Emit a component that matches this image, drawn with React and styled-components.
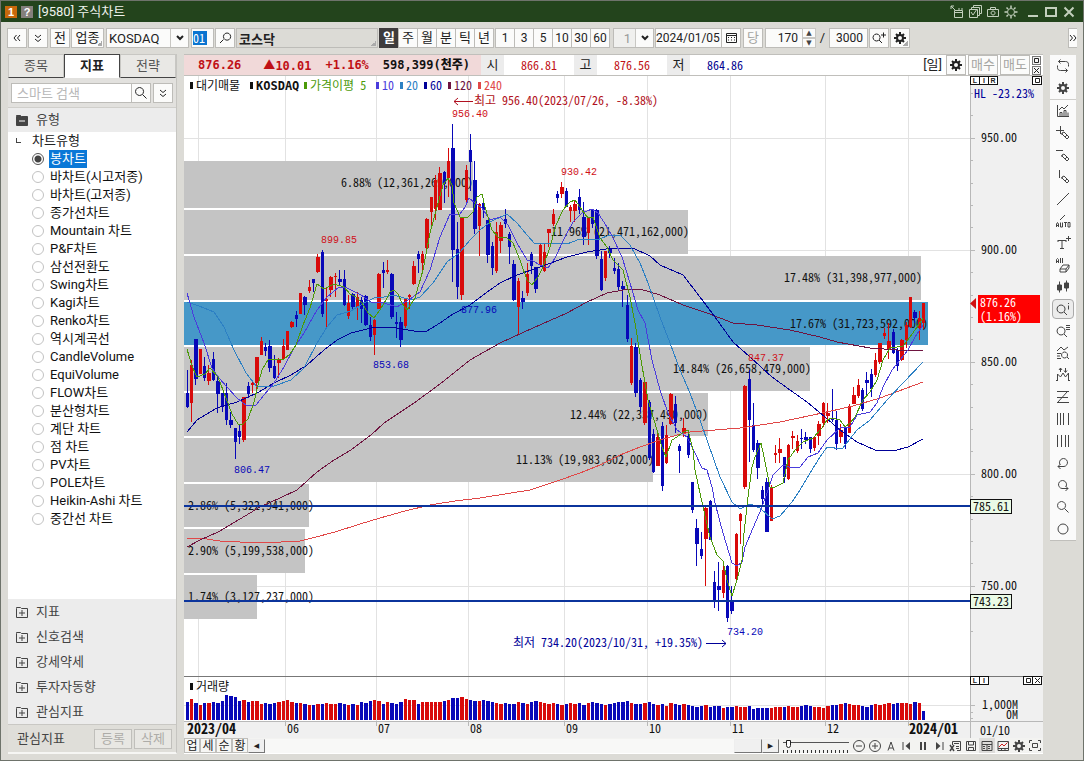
import React, { useState } from "react";
import styled, { createGlobalStyle, css } from "styled-components";

const UI = `Roboto, "Noto Sans CJK KR", sans-serif`;
const MONO = `"Noto Sans Mono CJK KR", "Noto Sans CJK KR", "Liberation Mono", monospace`;
const MONO_BOLD = `"DejaVu Sans Mono", "Noto Sans CJK KR", monospace`;

const GlobalStyle = createGlobalStyle`
  *, *::before, *::after { box-sizing: border-box; }
  body { margin: 0; background: #dcdbd6; font: 13px/18px ${UI}; color: #222; }
  button, input, select { font: inherit; color: inherit; margin: 0; border-radius: 0; }
  button { cursor: pointer; padding: 0; }
`;

/* ---------- icons ---------- */

const GEAR = (
  <>
    <circle cx="8" cy="8" r="3" strokeWidth="2" />
    <path d="M8 2v3M8 11v3M2 8h3M11 8h3M4 4l2 2M10 10l2 2M12 4l-2 2M6 10l-2 2" strokeWidth="2" />
  </>
);
const LENS = <path d="M9.5 9.5l4 4M6.5 2.5a4 4 0 1 0 .1 0z" />;
const PEN = <path d="M7 8l2-1 5 5-2 2-5-5zM7 8v2M10 12l2-2" />;

const ICONS = {
  dblLeft: <path d="M7.5 5L5 8l2.500 3M11 5L8.500 8l2.500 3" />,
  dblRight: <path d="M5 5l2.500 3L5 11M8.500 5L11 8l-2.500 3" />,
  dblDown: <path d="M5 5l3 2.500L11 5M5 9l3 2.500L11 9" />,
  down: <path d="M5 6l3 3 3-3" strokeWidth="2" />,
  lens: LENS,
  lensLeft: <path d="M6.500 9.500L3 13M10 3a3.600 3.600 0 1 0 .1 0z" />,
  lensPlus: <><path d="M5.500 4a3.500 3.500 0 1 0 .1 0zM8 10l3 3" /><path d="M10 5h5M12.500 2.500v5" /></>,
  calendar: <><path d="M3.500 3.500h10v9h-10zM3 5.500h11" /><path d="M5 7.500h7M5 10h7" strokeDasharray="1 2" /></>,
  gear: GEAR,
  sun: <><circle cx="8" cy="8" r="3.500" /><path d="M8 1.500V4M8 12v2.500M1.500 8H4M12 8h2.500M3.500 3.500L5 5M11 11l1.500 1.500M12.500 3.500L11 5M5 11l-1.500 1.500" strokeWidth="1.500" /></>,
  popout: <path d="M5.500 6.500h8v7h-8zM5.500 8.500h8M10 6V4M13 6V4M2 2l4 4M2 5V2h3" />,
  layers: <path d="M2.500 5.500h8v8h-8zM4.500 5V3.500h8v8H11M6.500 3V1.500h8v8H13M4 8l2 3 4-6" />,
  camera: <path d="M2.500 5.500h11v7h-11zM5.500 5V3.500h5V5M8 7a2 2 0 1 0 .1 0z" />,
  min: <path d="M3 12h10" strokeWidth="2" />,
  max: <path d="M3 4h10v8H3z" strokeWidth="2" />,
  close: <path d="M3.500 3.500l9 9M12.500 3.500l-9 9" strokeWidth="2" />,
  swap: <path d="M5.500 1.500l-2 2 2 2M3.500 3.500h7c2 0 3 1 3 3v2M10.500 14.500l2-2-2-2M12.500 12.500h-7c-2 0-3-1-3-3v-2" />,
  chartBars: <path d="M2.500 2v11.500H14M5 13V9.500h2V13M9 13V7.500h2V13M13 13V9.500M4 7l3-3 2 2 4-4" />,
  plusPen: <><path d="M1 5.500h8M5.500 1v8" />{PEN}</>,
  dashPen: <><path d="M1 3.500h7" />{PEN}</>,
  barPen: <><path d="M4.500 1v8" />{PEN}</>,
  slash: <path d="M2 14L14 2" />,
  auto: <><path d="M5 7l5-5" /><path d="M1.500 14v-3l1-1.500 1 1.500v3M1.500 12.500h2M5.500 9.500V14h2V9.500M9 9.500h3M10.500 9.500V14M13 9.500h2V14h-2z" /></>,
  text: <><path d="M3 5.500h8M3 5v2M11 5v2M7 5.500V14M5 13.500h4" /><path d="M11 3.500h5M13.500 1v5" /></>,
  eraser: <><path d="M1.500 6V2.500l1-1 1 1V6M1.500 4.500h2M5.500 1v5M7.500 1v5" /><path d="M5 12l3-4h6l-3 4zM5 12v3h6v-3M11 15l3-4V8" /></>,
  candles: <><path d="M4.500 2.500v11M11.500 1.500v11" /><path d="M2.500 6h4v5h-4zM9.500 4h4v5h-4z" fill="currentColor" /></>,
  lensI: <><path d="M6 4a4 4 0 1 0 .1 0zM9 11l3 3" /><path d="M13.500 4.500v4M13.500 2v1" /></>,
  lensList: <><path d="M6 4a4 4 0 1 0 .1 0zM9 11l3 3" /><path d="M11 2.500h4M11 4.500h4M11 6.500h4" /></>,
  waveLens: <><path d="M2 6l4-4 3 3 4-3M2 8.500h4M2 11h3M2 13.500h4" /><path d="M9.500 7a3 3 0 1 0 .1 0zM12 12l2 2" /></>,
  mountain: <path d="M2.500 14V7l3 3 2.500-4 2.500 4 3-4v8M5.500 1v4M4 3l1.500-2L7 3M10.500 1v4M9 3.500L10.500 5.500l1.500-2M1 13.500h2M13 13.500h2" />,
  zed: <path d="M2 2.500h12M12 3L3 13M2 8.500h11M2 13.500h12" />,
  bars3: <path d="M2.500 2v12M5.500 2v12M8.500 2v12M13.500 2v12" />,
  bars4: <path d="M2.500 2v12M6.500 2v12M10.500 2v12M13.500 2v12" />,
  undo: <path d="M5 9.500a4 4 0 1 1 4 2H3M5.500 9L3 11.500 5.500 14" />,
  redo: <path d="M11 9.500a4 4 0 1 0-4 2h6M10.500 9l2.500 2.500L10.500 14" />,
  circle: <circle cx="8" cy="8" r="5" />,
  zoomOut: <><circle cx="8" cy="8" r="5.500" /><path d="M5 8h6" /></>,
  zoomIn: <><circle cx="8" cy="8" r="5.500" /><path d="M5 8h6M8 5v6" /></>,
  peak: <path d="M5 12.500L8 4l3 8.500M6 10h4" />,
  first: <><path d="M4 4v8" /><path d="M11 4v8L6.500 8z" fill="currentColor" stroke="none" /></>,
  pause: <path d="M6 4v8M10 4v8" strokeWidth="2" />,
  last: <><path d="M12 4v8" /><path d="M5 4v8l4.500-4z" fill="currentColor" stroke="none" /></>,
  sheetX: <><path d="M5.500 7V3.500h8v9H10M7 5.500h5M9 8.500h3M9 10.500h3" /><path d="M3 7l4 6M7 7l-4 6" strokeWidth="1.500" /></>,
  save: <path d="M3.500 3.500h9v9h-9zM5.500 4v3h5V4M5.500 12V9.500h5V12" />,
  table: <><path d="M3 3.500h10v9H3zM3 6.500h10M8 7v5" /><path d="M4 8.500h3M9 8.500h3M4 10.500h3M9 10.500h3" strokeDasharray="2 1" /></>,
  chartBox: <><path d="M3 3.500h10.500v9H3zM3 10.500h10.500M6.500 11v1M10 11v1" /><path d="M4 9l3-3 2 2 3.500-3.500" stroke="#d02020" /></>,
  expand: <><path d="M5.500 5.500h5v4h-5z" /><path d="M2.500 5V2.500H5M11 2.500h2.500V5M13.500 10v2.500H11M5 12.500H2.500V10" /></>,
};

const IconSvg = styled.svg`
  display: block;
  flex: none;
  fill: none;
  stroke: currentColor;
  stroke-width: 1;
`;
const Icon = ({ name, size = 16 }) => (
  <IconSvg width={size} height={size} viewBox="0 0 16 16" aria-hidden="true">{ICONS[name]}</IconSvg>
);
const TinyIcon = ({ name }) => (
  <IconSvg width="7" height="7" viewBox="0 0 7 7" aria-hidden="true">
    <path d={name === "square" ? "M1.5 1.5h4v4h-4z" : "M1 1l5 5M6 1L1 6"} />
  </IconSvg>
);

/* ---------- window ---------- */

const Frame = styled.div`
  min-height: 100vh;
  display: flex;
  flex-direction: column;
  border: 1px solid #6e736b;
  background: #dcdbd6;
`;
const TitleBar = styled.header`
  display: flex;
  align-items: center;
  gap: 2px;
  height: 21px;
  padding: 0 6px 0 4px;
  background: #23441c;
  color: #eef2ec;
`;
const TitleTag = styled.span`
  width: 12px;
  height: 12px;
  margin-right: 2px;
  font: bold 11px/12px "Liberation Sans", sans-serif;
  text-align: center;
  color: #fff;
  background: ${(p) => (p.$warm ? "#c8690c" : "#85807c")};
`;
const Title = styled.h1`
  margin: 0 auto 0 1px;
  font: 13px/20px ${UI};
`;
const TitleButton = styled.button`
  display: grid;
  place-items: center;
  width: 16px;
  height: 18px;
  border: 0;
  background: none;
  color: #c3cfbd;
`;
const WindowButtons = styled.div`
  display: flex;
  gap: 2px;
  margin-left: 4px;
`;

/* ---------- top toolbar ---------- */

const Toolbar = styled.div`
  display: flex;
  align-items: center;
  gap: 1px;
  padding: 6px;
`;
const boxed = css`
  height: 20px;
  border: 1px solid #bdbcb8;
  background: #fbfbfa;
`;
const ToolButton = styled.button`
  ${boxed}
  display: flex;
  align-items: center;
  justify-content: center;
  flex: none;
  width: ${(p) => p.$w || 20}px;
  line-height: 16px;
  margin-left: ${(p) => p.$gap || 0}px;
  color: ${(p) => (p.$dim ? "#a5a5a2" : "#222")};
  ${(p) => p.$corner && "background: linear-gradient(135deg, transparent 50%, #aaa 50%) right 1px bottom 1px / 5px 5px no-repeat #fbfbfa;"}
`;
const SelectBox = styled.div`
  ${boxed}
  position: relative;
  display: flex;
  flex: none;
  width: ${(p) => p.$w}px;
  margin-left: ${(p) => p.$gap || 0}px;
  select {
    appearance: none;
    flex: 1;
    min-width: 0;
    border: 0;
    padding: 0 18px 0 2px;
    line-height: 17px;
    background: transparent;
    color: ${(p) => (p.$dim ? "#999" : "#222")};
    text-align-last: ${(p) => (p.$dim ? "right" : "left")};
    padding-right: ${(p) => (p.$dim ? 22 : 18)}px;
    ${(p) => p.$dim && "background: linear-gradient(#f0f0ee, #f0f0ee) left / 22px 100% no-repeat;"}
  }
  svg {
    position: absolute;
    right: 0;
    top: 1px;
    pointer-events: none;
  }
  &::after {
    content: "";
    position: absolute;
    right: 17px;
    top: 0;
    bottom: 0;
    border-left: 1px solid #c8c7c3;
  }
`;
const Field = styled.input`
  ${boxed}
  flex: none;
  width: ${(p) => p.$w}px;
  padding: 0 ${(p) => (p.$align ? 4 : 0)}px;
  margin-left: ${(p) => p.$gap || 0}px;
  font-size: 12px;
  line-height: 17px;
  text-align: ${(p) => p.$align || "left"};
`;
const CodeBox = styled.label`
  ${boxed}
  flex: none;
  width: 23px;
  padding: 2px 1px;
  margin-left: 1px;
  input {
    display: block;
    width: 14px;
    height: 14px;
    border: 0;
    padding: 0;
    font: 12px/14px ${MONO};
    color: #fff;
    background: #0a74d0;
  }
`;
const NameField = styled.input`
  ${boxed}
  flex: 0 1 142px;
  min-width: 60px;
  padding: 0 2px;
  font-weight: bold;
  background: linear-gradient(135deg, transparent 50%, #aaa 50%) right 1px bottom 1px / 5px 5px no-repeat #dcdbd6;
`;
const Periods = styled.div`
  display: flex;
  flex: none;
  margin-left: ${(p) => p.$gap || 0}px;
`;
const PeriodButton = styled.button`
  ${boxed}
  width: 20px;
  margin-right: -1px;
  line-height: 16px;
  font-size: ${(p) => (p.$num ? 12 : 13)}px;
  ${(p) => p.$on && "background: #3e3b3c; border-color: #3e3b3c; color: #fff; font-weight: bold;"}
`;
const Spinner = styled.div`
  display: flex;
  flex-direction: column;
  flex: none;
  margin-left: -2px;
  button {
    width: 14px;
    height: 10px;
    border: 1px solid #c8c7c3;
    background: #fbfbfa;
    font: 7px/7px "DejaVu Sans", sans-serif;
    color: #444;
  }
`;
const Slash = styled.span`
  width: 11px;
  text-align: center;
`;
const CalendarButton = styled(ToolButton)`
  margin-left: -2px;
`;
const MoreButton = styled(ToolButton)`
  width: 9px;
  margin-left: auto;
  border-right: 0;
  overflow: hidden;
`;

/* ---------- left pane ---------- */

const Body = styled.main`
  flex: 1;
  display: grid;
  grid-template-columns: 169px minmax(0, 1fr) 26px;
  gap: 7px;
  padding: 0 7px 6px;
`;
const Side = styled.aside`
  display: flex;
  flex-direction: column;
  border-right: 1px solid #c6c5c1;
  border-bottom: 2px solid #f6f6f4;
  background: #ececec;
`;
const Tabs = styled.div`
  display: grid;
  grid-template-columns: 1fr 1fr 1fr;
  background: #e6e5e2;
`;
const Tab = styled.button`
  height: 24px;
  border: 1px solid #c8c7c3;
  border-bottom-color: #444;
  background: #e9e8e5;
  color: #555;
  ${(p) => p.$on && "background: #fff; border-color: #444; border-bottom-color: #fff; color: #222; font-weight: bold;"}
`;
const SearchRow = styled.div`
  display: flex;
  height: 30px;
  padding: 5px 3px;
  border-bottom: 1px solid #d0cfcb;
  background: #e2e1de;
  input {
    ${boxed}
    flex: 1;
    min-width: 0;
    padding: 0 5px;
    background: #fff;
  }
  input::placeholder { color: #b8b8b8; }
  button { margin-left: -1px; }
  button + button { margin-left: 2px; }
`;
const SectionTitle = styled.button`
  display: flex;
  align-items: center;
  gap: 8px;
  height: ${(p) => p.$h}px;
  padding: 0 8px;
  border: 0;
  background: #ececec;
  text-align: left;
  color: #444;
`;
const Folder = styled.svg`
  display: block;
  width: 12px;
  height: 12px;
`;
const Tree = styled.fieldset`
  flex: 1;
  margin: 0;
  padding: 0 0 0 24px;
  border: 0;
  background: #fff;
  min-width: 0;
`;
const TreeRoot = styled.div`
  position: relative;
  height: 18px;
  &::before {
    content: "";
    position: absolute;
    left: -16px;
    top: 6px;
    width: 5px;
    height: 5px;
    border: 1px solid #444;
    border-width: 0 0 1px 1px;
  }
`;
const Choice = styled.label`
  display: flex;
  align-items: center;
  gap: 5px;
  height: 18px;
  color: #111;
  input {
    appearance: none;
    width: 12px;
    height: 12px;
    border: 1px solid #c2c2c2;
    border-radius: 50%;
    background: #fff;
  }
  input:checked {
    border-color: #555;
    background: radial-gradient(circle, #444 3px, #fff 4px);
  }
  span { padding: 0 1px; line-height: 18px; }
  input:checked + span { background: #0a78d7; color: #fff; }
`;
const SideFoot = styled.div`
  display: flex;
  align-items: center;
  gap: 2px;
  height: 28px;
  padding: 0 4px 0 9px;
  border-top: 1px solid #c9c8c4;
  background: #dfded9;
  color: #444;
  span { margin-right: auto; }
  button {
    width: 38px;
    height: 20px;
    line-height: 16px;
    border: 1px solid #c0bfbb;
    background: #e8e7e3;
    color: #adaca8;
  }
`;

/* ---------- chart panel ---------- */

const Panel = styled.section`
  display: flex;
  flex-direction: column;
  min-width: 0;
  background: #fff;
`;
const Quote = styled.div`
  display: flex;
  align-items: stretch;
  height: 22px;
  border: 1px solid #c0bfbb;
  border-width: 1px 0;
`;
const DayPrices = styled.dl`
  display: flex;
  margin: 0;
  font: 12px/20px ${MONO};
  dt {
    width: 23px;
    text-align: center;
    font: 13px/20px ${UI};
    background: #ececec;
  }
`;
const Price = styled.dd`
  width: 70px;
  margin: 0;
  padding-left: 17px;
  color: ${(p) => (p.$down ? "#000090" : "#c01016")};
`;
const Summary = styled.div`
  display: flex;
  gap: 14px;
  width: 297px;
  padding-left: 14px;
  background: #f1d9d9;
  font: bold 12px/20px ${MONO_BOLD};
  white-space: nowrap;
  color: #c01016;
  b:first-child { margin-right: 8px; }
  b:last-child { color: #111; }
  span { font-family: "Noto Sans CJK KR", sans-serif; }
`;
const QuoteTools = styled.div`
  display: flex;
  align-items: center;
  gap: 2px;
  margin-left: auto;
  padding-right: 2px;
  line-height: 18px;
  > span { margin-right: 2px; }
`;
const TinyStack = styled.div`
  display: grid;
  gap: 1px;
  button {
    width: 9px;
    height: 9px;
    border: 1px solid #777;
    background: #f4f4f4;
  }
`;
const PaneBox = styled.div`
  position: relative;
`;
const ChartSvg = styled.svg`
  display: block;
  width: 100%;
  height: auto;
  font: 12px ${MONO};
`;
const Badges = styled.div`
  position: absolute;
  top: 0;
  right: 0;
  width: 73px;
  padding-right: 2px;
  display: flex;
  justify-content: space-between;
  div { display: flex; }
  button {
    display: grid;
    place-items: center;
    width: 10px;
    height: 9px;
    border: 1px solid #111;
    margin-right: -1px;
    background: #fff;
    font: bold 7px/7px "Liberation Sans", sans-serif;
  }
`;
const BottomBar = styled.div`
  display: flex;
  align-items: center;
  height: 15px;
  background: #f3f3f1;
`;
const ModeButton = styled.button`
  width: 16px;
  height: 15px;
  border: 1px solid #c0bfbb;
  background: #f6f6f4;
  font: 12px/12px ${UI};
`;
const ScrollButton = styled.button`
  width: 17px;
  height: 14px;
  border: 1px solid;
  border-color: #eee #777 #777 #eee;
  background: #f0f0f0;
  font: 7px/10px "DejaVu Sans", sans-serif;
`;
const Track = styled.div`
  flex: 1;
  display: flex;
  justify-content: flex-end;
  height: 14px;
  background: #f8f8f7;
  button { width: 28px; }
`;
const ZoomRange = styled.input`
  appearance: none;
  width: 66px;
  height: 14px;
  margin: 0 2px 0 4px;
  background:
    linear-gradient(#555, #555) 0 3px / 100% 1px no-repeat,
    repeating-linear-gradient(90deg, #333 0 1px, transparent 1px 4px) 0 100% / 100% 3px no-repeat;
  &::-webkit-slider-thumb {
    appearance: none;
    width: 5px;
    height: 8px;
    margin-top: -3px;
    border: 1px solid #222;
    border-radius: 0 0 3px 3px;
    background: #fff;
  }
`;
const FootIcon = styled.button`
  display: grid;
  place-items: center;
  width: 16px;
  height: 15px;
  border: 0;
  background: ${(p) => (p.$on ? "#dedddb" : "none")};
  color: #444;
`;

/* ---------- right tool strip ---------- */

const Strip = styled.nav`
  display: flex;
  flex-direction: column;
  align-self: start;
  margin-top: 1px;
  border-bottom: 1px solid #c0bfbb;
  background: #fafafa;
  hr { width: 100%; margin: 0; border: 0; border-top: 1px solid #cfcecb; }
`;
const StripButton = styled.button`
  display: grid;
  place-items: center;
  height: 22px;
  margin: 0 2px;
  border: 0;
  background: none;
  color: #444;
  ${(p) => p.$on && "height: 20px; margin: 1px 2px; border: 1px solid #aaa; border-radius: 4px; background: #ececec;"}
`;

/* ---------- chart data ---------- */

const FIRST_X = 186.67;
const STEP = 4.357;
const candleX = (i) => Math.round(FIRST_X + STEP * i);
const bodyWidth = (i) => candleX(i + 1) - candleX(i) - 1;
/* Levels are stored in thirds of a chart unit, measured down from 110. */
const levelY = (v) => Math.round(110 + v / 3);

/* side, high, body top, body bottom, low */
const CANDLES = `
b780,849,891,895 r750,765,878,937 b687,687,806,825 r716,716,793,793 b742,768,804,812 r765,790,812,825 b727,746,810,812
b800,812,853,908 b848,850,892,905 b820,848,930,945 b905,930,945,955 b953,953,995,1048 b945,963,980,1003 r861,861,990,995
b815,828,851,865 r810,820,826,850 r741,741,819,840 r682,692,735,735 b700,712,722,738 b690,708,773,785 b735,768,803,808
r745,748,758,805 r687,708,747,750 r662,662,719,719 r632,636,650,655 b602,614,628,652 r549,549,611,611 b557,562,585,615
r510,531,543,550 b508,508,518,545 r433,441,486,490 b420,427,611,620 r530,566,574,654 r497,501,540,560 r490,498,501,560
b480,507,517,527 b480,507,584,588 r555,579,617,627 b550,552,590,600 r545,560,590,630 b560,570,598,638 b555,559,645,648
b620,645,681,692 r628,631,675,735 r490,492,597,598 b456,480,489,533 r450,481,486,493 b488,492,620,627 b607,636,642,683
b622,636,690,710 r565,565,648,655 r551,555,562,597 r452,468,522,525 b422,432,446,490 r423,432,458,485 r323,327,414,416
r262,262,306,353 r195,209,298,330 r172,189,300,300 b183,186,222,280 r114,153,205,260 b42,114,420,515 b335,416,530,566
r320,322,555,570 r164,180,270,280 b72,121,155,243 b153,210,356,372 r280,282,348,437 b270,280,300,325 b330,330,434,458
b397,408,474,494 r335,367,483,490 r335,346,392,430 b297,327,341,355 b365,372,410,462 b450,462,569,573 r505,513,591,672
b542,564,575,597 r460,493,548,558 b426,431,468,493 b471,471,536,548 r403,405,465,470 r403,426,483,487 r357,357,370,411
r297,312,342,348 b243,252,264,278 r217,231,251,265 b234,243,290,291 r285,291,303,335 r270,283,304,335 b237,261,300,312
b275,321,380,405 r322,324,368,405 b297,300,341,355 b297,300,438,447 b422,447,540,543 r424,424,504,512 b408,417,429,443
b445,474,483,492 b460,477,530,540 b512,528,538,590 b555,584,686,695 r685,708,820,826 b700,712,850,862 b805,810,890,905
r805,815,938,945 b870,877,1043,1050 b957,972,1085,1090 r968,980,1067,1067 b935,947,1128,1142 r945,975,1060,1062
r850,852,943,945 b857,882,940,968 b1002,1008,1022,1088 r923,954,973,980 b972,977,1035,1043 b1117,1117,1200,1210
b1227,1254,1302,1367 b1265,1317,1337,1347 r1192,1194,1288,1427 b1171,1173,1289,1290 b1383,1416,1473,1493 b1357,1428,1439,1502
r1355,1380,1448,1465 b1365,1368,1523,1535 b1428,1476,1502,1513 r1270,1272,1406,1410 r1208,1212,1232,1303 r826,828,1130,1137
b780,807,930,1056 b879,946,1019,1027 b990,999,1074,1108 b1128,1140,1167,1190 b1105,1116,1265,1266 r1125,1130,1232,1234
r1005,1029,1034,1058 r985,1017,1030,1058 b1041,1041,1100,1120 r1003,1005,1108,1110 r963,977,983,1018 r975,993,1022,1030
b957,984,988,1018 b965,980,990,1002 b980,980,1018,1030 r980,980,1015,1022 r933,942,978,1005 r877,879,938,950
r880,909,918,938 b837,926,930,935 b903,930,1003,1020 r942,960,980,998 b952,954,1003,1018 r882,888,968,970
r830,855,881,882 r807,825,857,865 b835,840,897,902 b786,810,820,860 b777,792,836,860 r728,750,794,800 r698,700,756,762
r655,669,677,687 r638,693,719,747 b657,666,728,733 b715,720,769,782 r687,689,750,752 r635,646,689,715 r560,561,652,655
b600,607,623,640 r603,625,655,690 r578,579,640,658
`.trim().split(/\s+/).map((s) => [s[0], ...s.slice(1).split(",").map(Number)]);

const UP = "#d80a0a";
const DOWN = "#0808b8";

/* One base-36 digit of bar height for each candle. */
const VOLUME =
  "ilhfhhihjponjkijjghghijkihhgffgghgghgfgfihjkjgihgilkkgiiiiijkmmnlkjjkjihghgg" +
  "ihgijihghgfghghfhihgfghiijhgghigfgehgfgfedefdeecdd" +
  "eddebccccdddeddefeddceffghgffedfgfghghhhgih9";

const AVERAGES = [
  ["#e04848", "187,539 200,538 220,541 240,542 262,543 300,541 316,537 335,532 360,524 380,518 405,511 430,505 455,501 480,498 505,494 530,490 545,485 560,480 580,473 600,465 620,455 640,447 660,440 677,435 690,432 740,428 780,422 813,415 840,409 853,406 880,398 923,382"],
  ["#6e1440", "187,547 200,540 218,532 235,522 260,507 280,498 297,490 317,472 334,460 351,450 371,435 384,423 414,403 440,384 470,360 500,343 533,328 567,313 587,302 607,293 623,290 640,289 660,295 683,305 707,313 733,323 757,325 790,330 820,337 837,342 870,348 897,350 923,351"],
  ["#000098", "187,432 197,420 217,408 237,402 257,393 274,383 291,375 307,365 324,350 337,340 351,333 371,328 391,327 414,331 427,331 440,323 453,314 470,305 483,295 500,283 517,275 540,267 567,257 587,252 613,248 633,248 650,256 660,265 683,275 700,297 715,317 733,342 750,357 772,377 790,390 807,402 825,417 840,430 857,442 875,450 893,451 908,447 923,439"],
  ["#2c80c4", "187,302 199,306 214,312 224,327 234,350 246,373 257,387 274,386 291,380 304,368 317,343 327,327 337,315 351,311 364,303 374,298 384,297 394,295 411,300 420,297 433,283 447,262 460,252 470,240 480,230 490,222 507,214 517,223 527,235 535,244 550,243 567,244 580,239 597,240 607,236 620,235 630,245 640,263 648,283 660,317 670,343 680,370 690,393 700,420 708,443 720,477 732,502 740,509 750,504 760,508 772,519 780,516 792,502 800,490 810,473 820,457 827,447 842,449 857,430 870,420 887,400 903,383 923,362"],
  ["#4a3cdc", "187,293 194,317 204,343 212,368 219,378 227,387 237,398 247,406 256,405 264,395 274,383 284,367 294,348 304,333 317,310 327,297 339,287 347,288 361,295 371,302 384,303 397,307 410,299 420,292 430,270 440,237 450,214 460,214 465,207 469,198 475,203 482,208 490,220 500,217 508,225 517,243 527,260 533,261 540,265 548,268 555,258 565,237 573,222 582,213 592,209 598,213 607,227 613,238 622,257 630,283 638,310 645,323 652,360 660,390 668,413 677,430 687,437 695,453 702,468 707,470 712,487 715,503 723,533 732,563 737,566 742,562 745,547 753,528 762,507 768,490 773,475 783,465 792,468 800,467 808,457 818,453 827,440 840,428 850,427 857,415 870,412 877,403 883,387 892,370 900,360 908,350 915,337 923,325"],
  ["#4c9a08", "187,349 192,366 197,377 205,374 210,368 218,377 226,398 232,414 238,424 242,425 248,419 254,402 258,385 262,370 268,360 274,359 284,359 290,354 296,345 303,325 310,308 317,284 324,289 334,284 344,287 350,294 356,297 362,303 368,313 374,318 380,310 386,300 390,292 394,290 398,294 402,303 407,310 415,298 423,270 430,233 437,207 443,185 448,178 452,185 454,203 460,217 468,217 473,212 477,197 482,194 485,207 492,230 498,237 507,238 513,243 520,260 527,280 532,285 538,277 543,267 550,247 556,225 563,210 570,202 575,200 582,210 588,218 593,217 600,238 607,247 613,260 623,270 630,297 635,323 641,360 648,400 657,430 662,447 666,457 672,440 677,437 682,433 688,430 693,450 695,470 703,507 710,537 717,555 723,561 727,580 732,596 737,580 742,560 744,533 748,497 752,467 755,457 761,443 764,457 770,487 775,487 783,483 788,460 795,450 803,442 813,438 822,428 827,420 832,418 840,420 845,427 850,423 855,417 863,400 870,392 877,380 883,360 890,348 897,347 903,346 910,337 917,327 923,318"],
];

/* top, height, right edge, label, label x */
const PROFILE = [
  [161, 47, 473, "6.88% (12,361,269,000)", 341],
  [210, 44, 688, "11.96% (21,471,162,000)", 551],
  [256, 44, 921, "17.48% (31,398,977,000)", 784],
  [302, 43, 928, "17.67% (31,723,592,000)", 790],
  [347, 44, 810, "14.84% (26,658,479,000)", 673],
  [393, 43, 708, "12.44% (22,337,490,000)", 570],
  [438, 44, 653, "11.13% (19,983,602,000)", 516],
  [484, 43, 309, "2.86% (5,322,941,000)", 188],
  [529, 44, 305, "2.90% (5,199,538,000)", 188],
  [575, 44, 257, "1.74% (3,127,237,000)", 188],
];

const MONTHS = [
  [198, ""], [285, "06"], [376, "07"], [468, "08"], [564, "09"], [647, "10"], [730, "11"], [825, "12"], [908, ""],
];
const PRICES = [[138, "950.00"], [250, "900.00"], [362, "850.00"], [474, "800.00"], [586, "750.00"]];
const MINOR_TICKS = Array.from({ length: 25 }, (_, i) => Math.round(93 + i * 22.4));
const SWINGS = [
  [452, 117, "956.40", 1], [561, 175, "930.42", 1], [321, 243, "899.85", 1], [748, 361, "847.37", 1],
  [461, 313, "877.96", 0], [373, 368, "853.68", 0], [234, 473, "806.47", 0], [727, 635, "734.20", 0],
];
const LEGEND = [
  [190, "대기매물", "#111"], [304, "가격이평 5", "#4c9a08"], [376, "10", "#4a3cdc"], [400, "20", "#2c80c4"],
  [424, "60", "#000098"], [448, "120", "#6e1440"], [478, "240", "#e04848"],
];

const PriceChart = () => (
  <ChartSvg viewBox="184 76 859 600" role="img" aria-label="KOSDAQ 일봉 차트">
    <rect x="970" y="76" width="73" height="600" fill="#f0f0f0" />
    <g stroke="#e2e2e2">
      {MONTHS.map(([x]) => <path key={x} d={`M${x}.5 76V676`} />)}
      {PRICES.map(([y]) => <path key={y} d={`M184 ${y}.5H970`} />)}
    </g>
    {PROFILE.map(([y, h, x2], i) => (
      <g key={y}>
        {i > 0 && <rect x="184" y={y - 2} width={Math.min(x2, PROFILE[i - 1][2]) - 184} height="2" fill="#fff" />}
        <rect x="184" y={y} width={x2 - 184} height={h} fill={i === 3 ? "#4698c8" : "#c4c4c4"} />
      </g>
    ))}
    {PROFILE.map(([y, , , text, x]) => <text key={y} x={x} y={y + 26} fill="#111">{text}</text>)}
    <g shapeRendering="crispEdges">
      {CANDLES.map(([side, hi, top, bottom, lo], i) => (
        <g key={i} fill={side === "r" ? UP : DOWN}>
          <rect x={candleX(i)} y={levelY(hi)} width="1" height={levelY(lo) - levelY(hi)} />
          <rect x={candleX(i) - 1} y={levelY(top)} width={bodyWidth(i)} height={Math.max(1, levelY(bottom) - levelY(top))} />
        </g>
      ))}
    </g>
    <g fill="none" strokeWidth="1" shapeRendering="crispEdges">
      {AVERAGES.map(([color, points]) => <polyline key={color} points={points} stroke={color} />)}
    </g>
    <g fontFamily="'Liberation Mono', monospace" fontSize="10">
      {SWINGS.map(([x, y, text, up]) => <text key={text} x={x} y={y} fill={up ? "#d01018" : "#0808b8"}>{text}</text>)}
    </g>
    <path d="M184 506H970M184 601H970" stroke="#0b349c" strokeWidth="2" />
    <path d="M458 98l-4 3.500 4 3.500M454 101.500H473" fill="none" stroke="#b01020" />
    <text x="474" y="105" fill="#b01020">최고 956.40(2023/07/26, -8.38%)</text>
    <text x="513" y="647" fill="#000098">최저 734.20(2023/10/31, +19.35%)</text>
    <path d="M706 643.500H726M722 640l4 3.500-4 3.500" fill="none" stroke="#000098" />
    {LEGEND.map(([x, text, color]) => (
      <g key={text} fill={color}>
        <rect x={x} y="82" width="3" height="7" />
        <text x={x + 6} y="90">{text}</text>
      </g>
    ))}
    <rect x="250" y="82" width="3" height="7" fill="#111" />
    <text x="256" y="90" fontFamily={MONO_BOLD} fontWeight="bold" fill="#111">KOSDAQ</text>
    <path d="M970.500 76V676" stroke="#b8b8b8" />
    <g stroke="#b8b8b8">
      {MINOR_TICKS.map((y) => <path key={y} d={`M971 ${y}.5h2`} />)}
      {PRICES.map(([y]) => <path key={y} d={`M971 ${y}.5h4`} />)}
    </g>
    {PRICES.map(([y, text]) => <text key={y} x="981" y={y + 4} fill="#111">{text}</text>)}
    <text x="974" y="98" fill="#000098">HL -23.23%</text>
    <rect x="978" y="295" width="62" height="28" fill="#f00" />
    <path d="M976 298v11l-6-5.500z" fill="#d01010" />
    <text x="980" y="307" fill="#fff">876.26</text>
    <text x="980" y="321" fill="#fff">(1.16%)</text>
    {[[499, "785.61"], [594, "743.23"]].map(([y, text]) => (
      <g key={y}>
        <rect x="970.500" y={`${y}.5`} width="41" height="14" fill="#eafbe6" stroke="#111" />
        <text x="973" y={y + 12} fill="#111">{text}</text>
      </g>
    ))}
  </ChartSvg>
);

const VolumeChart = () => (
  <ChartSvg viewBox="184 676 859 62" role="img" aria-label="거래량">
    <rect x="970" y="676" width="73" height="62" fill="#f0f0f0" />
    <rect x="184" y="721" width="859" height="17" fill="#f0f0f0" />
    <g stroke="#e2e2e2">
      {MONTHS.map(([x]) => <path key={x} d={`M${x}.5 677V721`} />)}
      <path d="M184 705.500H970" />
    </g>
    <path d="M184 676.500H1043" stroke="#777" />
    <g shapeRendering="crispEdges">
      {CANDLES.map(([side], i) => {
        const height = parseInt(VOLUME[i], 36);
        const up = side === "r" && i < CANDLES.length - 1;
        return <rect key={i} x={candleX(i) - 1} y={720 - height} width={bodyWidth(i)} height={height} fill={up ? UP : DOWN} />;
      })}
    </g>
    <path d="M184 721.500H1043M970.500 677V738" stroke="#b8b8b8" />
    <path d="M971 705.500h4M971 712.500h2M971 718.500h2" stroke="#b8b8b8" />
    {MONTHS.map(([x]) => <path key={x} d={`M${x}.5 722v4`} stroke="#b8b8b8" />)}
    <rect x="190" y="683" width="3" height="7" fill="#111" />
    <g fill="#111">
      <text x="196" y="691">거래량</text>
      {MONTHS.map(([x, text]) => <text key={x} x={x + 2} y="733">{text}</text>)}
      <text x="187" y="734" fontWeight="bold" fontSize="14">2023/04</text>
      <text x="909" y="734" fontWeight="bold" fontSize="14">2024/01</text>
      <text x="980" y="735">01/10</text>
      <text x="1018" y="709" textAnchor="end">1,000M</text>
      <text x="1018" y="719" textAnchor="end">0M</text>
    </g>
  </ChartSvg>
);

/* ---------- app ---------- */

const TYPES = [
  "봉차트", "바차트(시고저종)", "바차트(고저종)", "종가선차트", "Mountain 차트", "P&F차트", "삼선전환도", "Swing차트",
  "Kagi차트", "Renko차트", "역시계곡선", "CandleVolume", "EquiVolume", "FLOW차트", "분산형차트", "계단 차트", "점 차트",
  "PV차트", "POLE차트", "Heikin-Ashi 차트", "중간선 차트",
];
const SECTIONS = ["지표", "신호검색", "강세약세", "투자자동향", "관심지표"];
const UNITS = ["일", "주", "월", "분", "틱", "년"];
const MINUTES = ["1", "3", "5", "10", "30", "60"];
const STRIP_TOP = ["swap", "gear"];
const STRIP = [
  "chartBars", "plusPen", "dashPen", "barPen", "slash", "auto", "text", "eraser", "candles", "lensI", "lensList",
  "waveLens", "mountain", "zed", "bars3", "bars4", "undo", "redo", "lens", "circle",
];
const FOOT = ["zoomOut", "zoomIn", "peak", "first", "pause", "last", "sheetX", "save", "table", "chartBox", "gear", "expand"];

const FolderIcon = ({ open }) => (
  <Folder viewBox="0 0 12 12" aria-hidden="true">
    <path d="M.5 2.500V1.500h4l1 1h6v9H.5z" fill={open ? "#444" : "none"} stroke="#444" />
    <path d={open ? "M3 7h6" : "M3 7h6M6 4v6"} stroke={open ? "#fff" : "#444"} />
  </Folder>
);

export default function App() {
  const [type, setType] = useState("봉차트");
  const [unit, setUnit] = useState("일");
  return (
    <Frame>
      <GlobalStyle />
      <TitleBar>
        <TitleTag $warm>1</TitleTag>
        <TitleTag>?</TitleTag>
        <Title>[9580] 주식차트</Title>
        {["popout", "layers", "camera", "sun"].map((n) => (
          <TitleButton key={n} aria-label={n}><Icon name={n} /></TitleButton>
        ))}
        <WindowButtons>
          {["min", "max", "close"].map((n) => (
            <TitleButton key={n} aria-label={n}><Icon name={n} /></TitleButton>
          ))}
        </WindowButtons>
      </TitleBar>

      <Toolbar>
        <ToolButton aria-label="이전"><Icon name="dblLeft" /></ToolButton>
        <ToolButton aria-label="펼치기"><Icon name="dblDown" /></ToolButton>
        <ToolButton $gap={1}>전</ToolButton>
        <ToolButton $w={33} $corner>업종</ToolButton>
        <SelectBox $w={83} $gap={1}>
          <select aria-label="시장" defaultValue="KOSDAQ"><option>KOSDAQ</option><option>KOSPI</option></select>
          <Icon name="down" />
        </SelectBox>
        <CodeBox><input aria-label="업종 코드" defaultValue="01" /></CodeBox>
        <ToolButton aria-label="종목 찾기"><Icon name="lensLeft" /></ToolButton>
        <NameField aria-label="업종명" defaultValue="코스닥" readOnly />
        <Periods>
          {UNITS.map((u) => <PeriodButton key={u} $on={u === unit} onClick={() => setUnit(u)}>{u}</PeriodButton>)}
        </Periods>
        <Periods $gap={1}>
          {MINUTES.map((m) => <PeriodButton key={m} $num>{m}</PeriodButton>)}
        </Periods>
        <SelectBox $w={41} $gap={3} $dim>
          <select aria-label="주기" defaultValue="1"><option>1</option><option>2</option></select>
          <Icon name="down" />
        </SelectBox>
        <Field $w={67} aria-label="날짜" defaultValue="2024/01/05" />
        <CalendarButton aria-label="달력"><Icon name="calendar" /></CalendarButton>
        <ToolButton $gap={1} $dim>당</ToolButton>
        <Field $w={38} $gap={1} $align="right" aria-label="표시 봉 수" defaultValue="170" />
        <Spinner>
          <button aria-label="늘리기">▲</button>
          <button aria-label="줄이기">▼</button>
        </Spinner>
        <Slash>/</Slash>
        <Field $w={39} $align="right" aria-label="전체 봉 수" defaultValue="3000" />
        <ToolButton aria-label="확대 조회"><Icon name="lensPlus" /></ToolButton>
        <ToolButton $corner aria-label="설정"><Icon name="gear" /></ToolButton>
        <MoreButton aria-label="더 보기"><Icon name="dblRight" /></MoreButton>
      </Toolbar>

      <Body>
        <Side>
          <Tabs>
            {["종목", "지표", "전략"].map((t) => <Tab key={t} $on={t === "지표"}>{t}</Tab>)}
          </Tabs>
          <SearchRow>
            <input aria-label="스마트 검색" placeholder="스마트 검색" />
            <ToolButton aria-label="검색"><Icon name="lens" /></ToolButton>
            <ToolButton aria-label="펼치기"><Icon name="dblDown" /></ToolButton>
          </SearchRow>
          <SectionTitle $h={24}><FolderIcon open />유형</SectionTitle>
          <Tree aria-label="차트유형">
            <TreeRoot>차트유형</TreeRoot>
            {TYPES.map((t) => (
              <Choice key={t}>
                <input type="radio" name="chart-type" checked={t === type} onChange={() => setType(t)} />
                <span>{t}</span>
              </Choice>
            ))}
          </Tree>
          {SECTIONS.map((s) => <SectionTitle key={s} $h={25}><FolderIcon />{s}</SectionTitle>)}
          <SideFoot><span>관심지표</span><button>등록</button><button>삭제</button></SideFoot>
        </Side>

        <Panel>
          <Quote>
            <Summary><b>876.26</b><b><span>▲</span>10.01</b><b>+1.16%</b><b>598,399(천주)</b></Summary>
            <DayPrices>
              <dt>시</dt><Price>866.81</Price>
              <dt>고</dt><Price>876.56</Price>
              <dt>저</dt><Price $down>864.86</Price>
            </DayPrices>
            <QuoteTools>
              <span>[일]</span>
              <ToolButton aria-label="차트 설정"><Icon name="gear" /></ToolButton>
              <ToolButton $w={30} $dim>매수</ToolButton>
              <ToolButton $w={30} $dim>매도</ToolButton>
              <TinyStack>
                <button aria-label="최대화"><TinyIcon name="square" /></button>
                <button aria-label="닫기"><TinyIcon name="x" /></button>
              </TinyStack>
            </QuoteTools>
          </Quote>
          <PaneBox>
            <PriceChart />
            <Badges>
              <div><button>L</button><button>I</button><button>R</button></div>
              <div><button aria-label="최대화"><TinyIcon name="square" /></button></div>
            </Badges>
          </PaneBox>
          <PaneBox>
            <VolumeChart />
            <Badges>
              <div><button>L</button><button>I</button></div>
              <div>
                <button aria-label="최대화"><TinyIcon name="square" /></button>
                <button aria-label="닫기"><TinyIcon name="x" /></button>
              </div>
            </Badges>
          </PaneBox>
          <BottomBar>
            {["업", "세", "순", "황"].map((m) => <ModeButton key={m}>{m}</ModeButton>)}
            <ScrollButton aria-label="왼쪽">◀</ScrollButton>
            <Track><ScrollButton aria-label="스크롤 위치" /></Track>
            <ScrollButton aria-label="오른쪽">▶</ScrollButton>
            <ZoomRange type="range" min="0" max="100" defaultValue="5" aria-label="배율" />
            {FOOT.map((n) => <FootIcon key={n} $on={n === "table"} aria-label={n}><Icon name={n} /></FootIcon>)}
          </BottomBar>
        </Panel>

        <Strip>
          {STRIP_TOP.map((n) => <StripButton key={n} aria-label={n}><Icon name={n} /></StripButton>)}
          <hr />
          {STRIP.map((n) => <StripButton key={n} $on={n === "lensI"} aria-label={n}><Icon name={n} /></StripButton>)}
        </Strip>
      </Body>
    </Frame>
  );
}
